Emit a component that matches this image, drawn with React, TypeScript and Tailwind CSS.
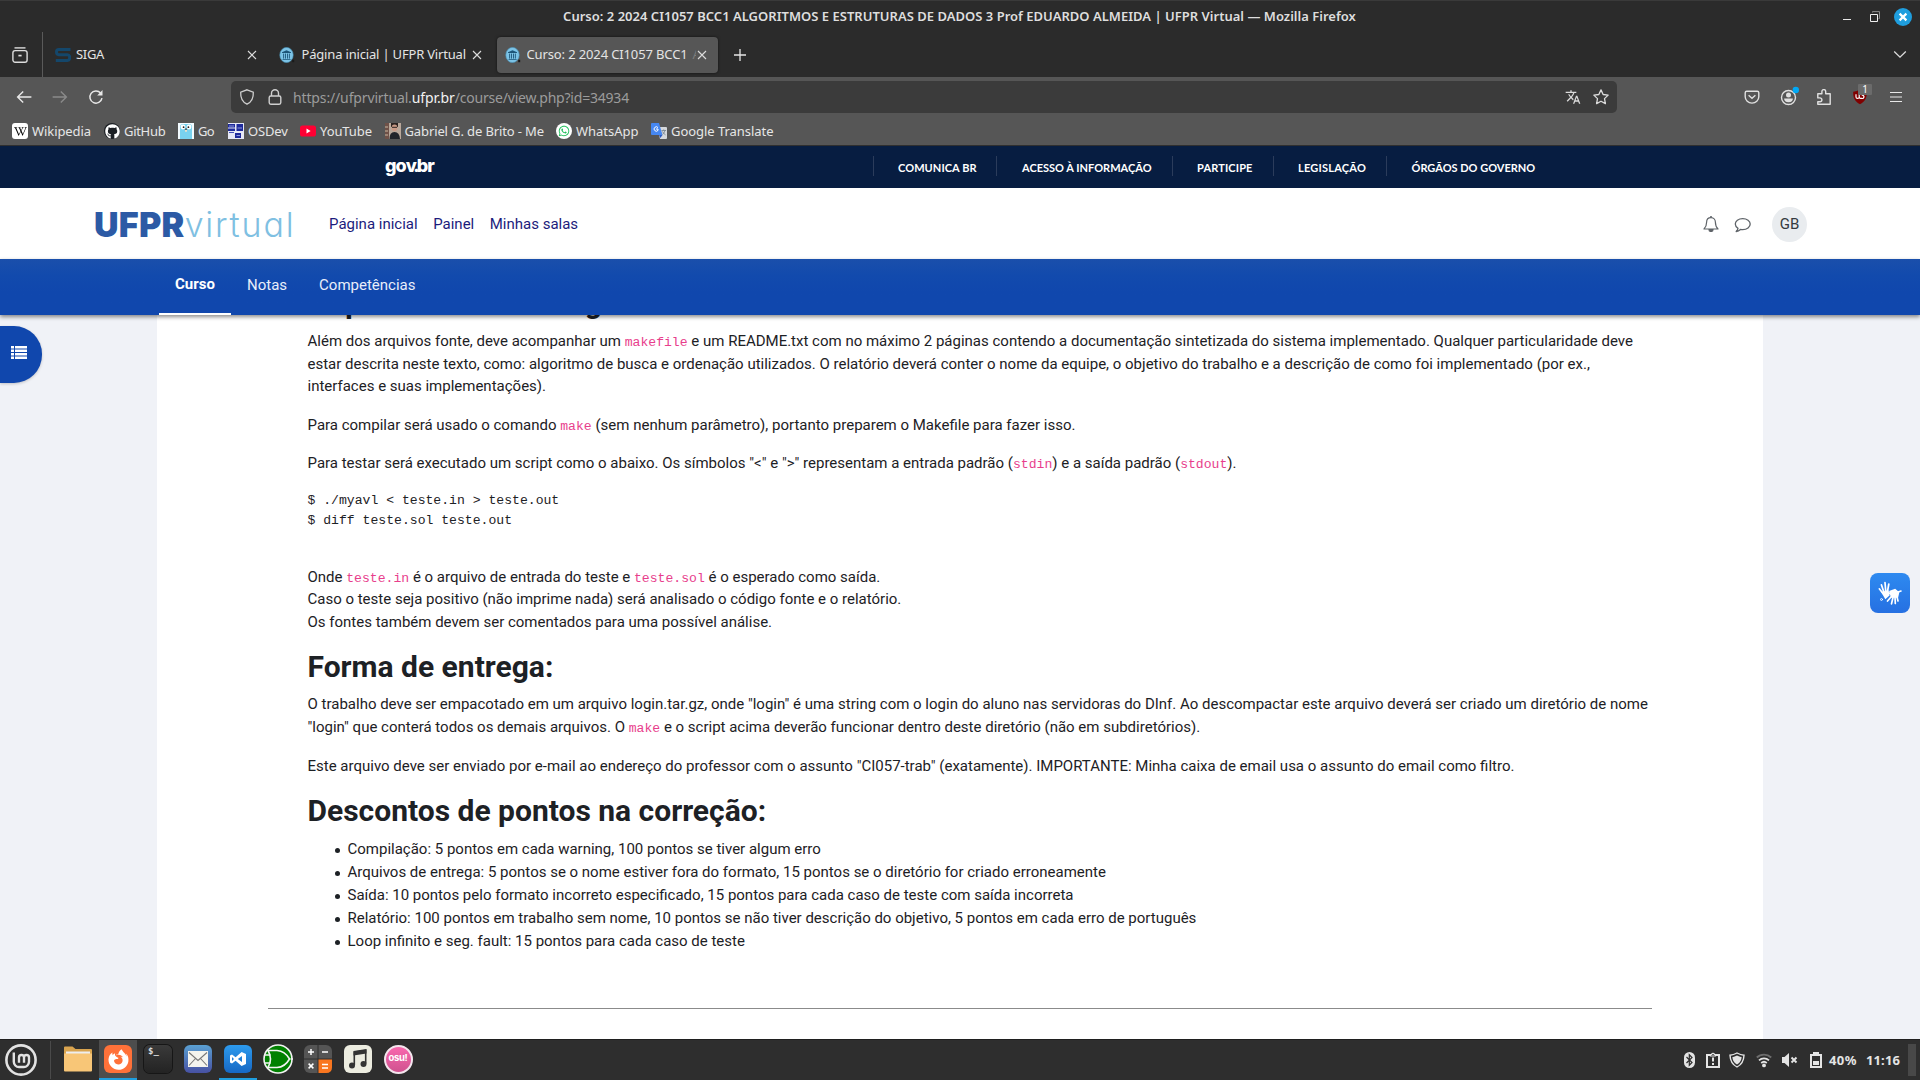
import type { ReactNode } from "react";
import { FaFirefoxBrowser, FaGithub, FaWhatsapp, FaWikipediaW } from "react-icons/fa6";
import { MdTranslate } from "react-icons/md";

/* ---------- small helpers ---------- */

function Code({ children }: { children: ReactNode }) {
  return (
    <code className="font-['Liberation_Mono',monospace] text-[13.125px] leading-none text-[#e83e8c]">{children}</code>
  );
}

function CloseX() {
  return (
    <svg className="h-3 w-3 shrink-0" viewBox="0 0 12 12" fill="none" stroke="#dcdcdc" strokeWidth="1.1">
      <path d="M2 2l8 8M10 2l-8 8" />
    </svg>
  );
}

function UfprFavicon() {
  return (
    <svg className="h-4 w-4 shrink-0" viewBox="0 0 16 16">
      <ellipse cx="7.500" cy="8" rx="6.700" ry="7.600" fill="#7cc3e6" stroke="#4d9cc4" strokeWidth=".6" />
      <path d="M3 5.200L7.500 3.200 12 5.200v.8H3zM3.600 12.300h8v.8h-8z" fill="#1c5578" />
      <path d="M4.600 6.600v5M6.500 6.600v5M8.500 6.600v5M10.400 6.600v5" stroke="#1c5578" strokeWidth=".9" />
      <path d="M13.200 12.800h2v2.400h-2z" fill="#1a1a1a" />
    </svg>
  );
}

/* ---------- browser chrome ---------- */

function TitleBar() {
  return (
    <div className="flex h-8 items-center border-t border-[#3a3a3a]">
      <div className="w-[1840px] shrink-0 pb-[2px] pl-[79px] text-center text-[13px] leading-4 font-semibold tracking-[0.015px] text-[#dedede]">
        Curso: 2 2024 CI1057 BCC1 ALGORITMOS E ESTRUTURAS DE DADOS 3 Prof EDUARDO ALMEIDA | UFPR Virtual — Mozilla
        Firefox
      </div>
      <svg className="ml-[2px] h-4 w-4" viewBox="0 0 16 16">
        <path d="M1 10.500h8" stroke="#e8e8e8" />
      </svg>
      <svg className="ml-[11px] h-4 w-4" viewBox="0 0 16 16" fill="none">
        <path d="M3.500 3.500v-.9h7v7h-1" stroke="#8c8c8c" />
        <path d="M1.500 5.500h7v7h-7z" stroke="#f0f0f0" />
      </svg>
      <div className="ml-[9px] flex h-[18px] w-[18px] items-center justify-center rounded-full bg-[#1f9ede]">
        <svg className="h-[10px] w-[10px]" viewBox="0 0 10 10" stroke="#fff" strokeWidth="2.200">
          <path d="M1.600 1.600l6.800 6.800M8.400 1.600L1.600 8.400" />
        </svg>
      </div>
    </div>
  );
}

function TabStrip() {
  return (
    <div className="flex h-[45px] items-center text-[13px] text-[#e4e4e4]">
      <svg className="ml-[12px] h-4 w-4" viewBox="0 0 16 16" fill="none" stroke="#dcdcdc" strokeWidth="1.400">
        <path d="M2.500.9h11" />
        <rect x=".9" y="3.600" width="14.200" height="11.600" rx="2.200" />
        <path d="M6.400 8.600h3.200" strokeWidth="1.700" />
      </svg>
      <div className="ml-[14px] h-full w-px bg-[#5a5a5a]" />
      <div className="flex w-[224px] items-center pl-[12px]">
        <svg className="h-4 w-4" viewBox="0 0 16 16" fill="none" stroke="#14476b" strokeWidth="3">
          <path d="M15.500 2.400H3.800Q1.500 2.400 1.500 5T3.800 7.700h8.600q2.300 0 2.300 2.800t-2.300 2.900H.8" />
        </svg>
        <span className="ml-[5px] flex-1 tracking-[-0.300px]">SIGA</span>
        <span className="mr-[9px]">
          <CloseX />
        </span>
      </div>
      <div className="flex w-[230px] items-center pl-[12px]">
        <UfprFavicon />
        <span className="ml-[6.500px] flex-1 tracking-[-0.180px] whitespace-nowrap">Página inicial | UFPR Virtual</span>
        <span className="mr-[14px]">
          <CloseX />
        </span>
      </div>
      <div className="flex h-9 w-[221px] items-center rounded-[4px] bg-[#565656] pl-[8px] shadow-[0_0_3px_rgba(0,0,0,0.6)]">
        <UfprFavicon />
        <span className="ml-[5.500px] flex w-[169.500px] gap-[5px] overflow-hidden tracking-[-0.130px] whitespace-nowrap">
          Curso: 2 2024 CI1057 BCC1 <span className="text-[#7c7c7c]">A</span>
        </span>
        <CloseX />
      </div>
      <svg className="ml-[15px] h-[14px] w-[14px]" viewBox="0 0 14 14" stroke="#e6e6e6" strokeWidth="1.300">
        <path d="M7 1v12M1 7h12" />
      </svg>
      <svg className="mr-[13px] ml-auto h-[14px] w-[14px]" viewBox="0 0 14 14" fill="none" stroke="#dcdcdc" strokeWidth="1.300">
        <path d="M1.200 3.500l5.800 5.600 5.800-5.600" />
      </svg>
    </div>
  );
}

function NavBar() {
  return (
    <div className="flex h-10 items-center text-[#e8e8e8]">
      <svg className="ml-4 h-4 w-4" viewBox="0 0 16 16" fill="none" stroke="#e8e8e8" strokeWidth="1.400">
        <path d="M7.200 2.400L1.600 8l5.600 5.600M1.800 8h13.600" />
      </svg>
      <svg className="ml-5 h-4 w-4" viewBox="0 0 16 16" fill="none" stroke="#8a8a8a" strokeWidth="1.400">
        <path d="M8.800 2.400L14.400 8l-5.600 5.600M14.200 8H.6" />
      </svg>
      <svg className="ml-5 h-4 w-4" viewBox="0 0 16 16" fill="none" stroke="#e8e8e8" strokeWidth="1.500">
        <path d="M14 9.200A6.100 6.100 0 1 1 12.600 4" />
        <path d="M14.500 1v5.400H9.200z" fill="#e8e8e8" stroke="none" />
      </svg>
      <div className="ml-[127px] flex h-8 w-[1386px] items-center rounded-[5px] bg-[#3b3b3b]">
        <svg className="ml-2 h-4 w-4" viewBox="0 0 16 16" fill="none" stroke="#cfcfcf" strokeWidth="1.300">
          <path d="M8 .8l6.300 2.300c.3 5.600-1.200 9.700-6.300 12.100C2.900 12.800 1.400 8.700 1.700 3.100z" />
        </svg>
        <svg className="ml-3 h-4 w-4" viewBox="0 0 16 16" fill="none" stroke="#cfcfcf" strokeWidth="1.400">
          <rect x="2.200" y="7" width="11.600" height="8.200" rx="1.600" />
          <path d="M4.500 7V4.200a3.500 3.500 0 0 1 7 0V7" />
        </svg>
        <span className="ml-[10px] flex text-[14px] text-[#9c9c9c]">
          <span className="tracking-[-0.140px]">https://ufprvirtual.</span>
          <span className="tracking-[-0.100px] text-[#f2f2f2]">ufpr.br</span>
          <span className="tracking-[-0.210px]">/course/view.php?id=34934</span>
        </span>
        <MdTranslate className="ml-auto h-4 w-4 text-[#dcdcdc]" />
        <svg className="mr-2 ml-3 h-4 w-4" viewBox="0 0 16 16" fill="none" stroke="#dcdcdc" strokeWidth="1.300" strokeLinejoin="round">
          <path d="M8 .9l2.150 4.600 5 .650-3.650 3.500.9 5L8 12.200l-4.400 2.450.9-5L.850 6.150l5-.650z" />
        </svg>
      </div>
      <svg className="ml-[127px] h-4 w-4" viewBox="0 0 16 16" fill="none" stroke="#e0e0e0" strokeWidth="1.400">
        <path d="M2.700 2.300h10.600q1.500 0 1.500 1.500v4a6.800 6.300 0 0 1-13.600 0v-4q0-1.500 1.500-1.500z" />
        <path d="M4.600 6.200L8 9.300l3.400-3.100" />
      </svg>
      <svg className="ml-5 h-[22px] w-5" viewBox="0 0 20 22" fill="none">
        <circle cx="8.500" cy="11.500" r="7" stroke="#e0e0e0" strokeWidth="1.400" />
        <circle cx="8.500" cy="9" r="2.500" fill="#e0e0e0" />
        <path d="M4.100 12.600h8.800q0 3.700-4.400 3.700t-4.400-3.700z" fill="#e0e0e0" />
        <circle cx="15.800" cy="4" r="3.200" fill="#00a8f5" />
      </svg>
      <svg className="ml-4 h-4 w-4" viewBox="0 0 16 16" fill="none" stroke="#e0e0e0" strokeWidth="1.400" strokeLinejoin="round">
        <path d="M1.800 8.900V4.800h4.100V2.500a1.900 1.900 0 0 1 3.800 0v2.300h4.500v10.400H1.800v-2.500H4a1.900 1.900 0 0 0 0-3.800z" />
      </svg>
      <div className="relative ml-5 h-4 w-4">
        <svg className="h-4 w-4" viewBox="0 0 16 16">
          <path d="M8 .5q3.500 2 6.800 2.200c.3 6-1.800 9.900-6.800 12.600C3 12.600.900 8.700 1.200 2.700 4.500 2.500 8 .5 8 .5z" fill="#800000" />
          <path d="M4 5.200v2.700q0 1.500 1.600 1.500t1.600-1.500V5.200v2.700q0 1.500 2.500 1.500a1.700 1.700 0 1 0 0-3.200" stroke="#fff" fill="none" strokeWidth="1.200" />
        </svg>
        <span className="absolute -top-[5px] left-[6px] h-[11px] w-[14px] rounded-[1px] bg-[#6b6b6b] text-center text-[10px] leading-[11px] text-white">
          1
        </span>
      </div>
      <svg className="ml-5 h-4 w-4" viewBox="0 0 16 16" stroke="#e8e8e8" strokeWidth="1.200">
        <path d="M2 3.500h12M2 8h12M2 12.500h12" />
      </svg>
    </div>
  );
}

function Bookmark({ icon, label, className }: { icon: ReactNode; label: string; className: string }) {
  return (
    <div className={className}>
      <span className="flex h-4 w-4 shrink-0 items-center justify-center">{icon}</span>
      <span className="ml-1 pt-[2px] whitespace-nowrap">{label}</span>
    </div>
  );
}

function BookmarksBar() {
  return (
    <div className="flex h-[29px] items-center border-b border-[#2f2f2f] pl-3 text-[13px] text-[#e6e6e6]">
      <Bookmark
        className="flex w-[92px] items-center tracking-[-0.080px]"
        label="Wikipedia"
        icon={
          <span className="flex h-4 w-4 items-center justify-center rounded-[3px] bg-white">
            <FaWikipediaW className="h-[13px] w-[13px] text-black" />
          </span>
        }
      />
      <Bookmark
        className="flex w-[74px] items-center tracking-[-0.300px]"
        label="GitHub"
        icon={
          <span className="flex h-4 w-4 items-center justify-center rounded-full bg-[#1b1f24]">
            <FaGithub className="h-[15px] w-[15px] text-white" />
          </span>
        }
      />
      <Bookmark
        className="flex w-[50px] items-center tracking-[-0.600px]"
        label="Go"
        icon={
          <svg className="h-4 w-4" viewBox="0 0 16 16">
            <path d="M0 0h16v16H0z" fill="#f3fbff" />
            <path d="M2 16V4q0-3 3-3h6q3 0 3 3v12z" fill="#79d2ef" />
            <circle cx="5" cy="4" r="2.400" fill="#fff" />
            <circle cx="11" cy="4" r="2.400" fill="#fff" />
            <circle cx="5.600" cy="4.200" r=".9" fill="#222" />
            <circle cx="10.400" cy="4.200" r=".9" fill="#222" />
            <path d="M7 6.200h2v2.600H7z" fill="#e9e0cc" />
            <path d="M6.900 5.600h2.200v1.100H6.900z" fill="#333" />
          </svg>
        }
      />
      <Bookmark
        className="flex w-[72px] items-center tracking-[-0.150px]"
        label="OSDev"
        icon={
          <svg className="h-4 w-4" viewBox="0 0 16 16">
            <path d="M0 0h16v16H0z" fill="#e6e8f6" />
            <path d="M0 1h7v3.500H0zM8.500 1H15v7H8.500zM0 5.500h7V8H0zM7 10h6v5H7z" fill="#1e2a9b" />
            <path d="M1 3h5M9.500 5h4.500M8.500 12.500H12" stroke="#aab4ee" strokeWidth=".8" />
            <path d="M1 9.500h5" stroke="#4450b8" />
          </svg>
        }
      />
      <Bookmark
        className="flex w-[84.500px] items-center tracking-[-0.080px]"
        label="YouTube"
        icon={
          <svg className="h-4 w-4" viewBox="0 0 16 16">
            <rect y="2.500" width="16" height="11" rx="2.600" fill="#ff0033" />
            <path d="M6.500 5.600L10.600 8l-4.100 2.400z" fill="#fff" />
          </svg>
        }
      />
      <Bookmark
        className="flex w-[171.500px] items-center tracking-[-0.120px]"
        label="Gabriel G. de Brito - Me"
        icon={
          <svg className="h-4 w-4" viewBox="0 0 16 16">
            <path d="M0 0h16v16H0z" fill="#b9a89b" />
            <path d="M0 0h4v16H0z" fill="#6f5148" />
            <path d="M0 4h3M0 8h3M0 12h3" stroke="#c9b8a0" />
            <path d="M6 0h7v4H6z" fill="#2a2220" />
            <ellipse cx="9.500" cy="4.800" rx="2.900" ry="3.400" fill="#c99a86" />
            <path d="M7 4.300h5" stroke="#2d2522" />
            <path d="M4.500 16q0-7 5-7t5.500 7z" fill="#22252b" />
          </svg>
        }
      />
      <Bookmark
        className="flex w-[95px] items-center tracking-[-0.020px]"
        label="WhatsApp"
        icon={
          <span className="flex h-4 w-4 items-center justify-center rounded-full bg-white">
            <FaWhatsapp className="h-[12px] w-[12px] text-[#1fbf5a]" />
          </span>
        }
      />
      <Bookmark
        className="flex w-[125px] items-center tracking-[-0.040px]"
        label="Google Translate"
        icon={
          <svg className="h-4 w-4" viewBox="0 0 16 16">
            <path d="M6 4h9q1 0 1 1v10q0 1-1 1H9z" fill="#d5d8dc" />
            <path d="M1 0h7l3.500 12H1q-1 0-1-1V1q0-1 1-1z" fill="#4687f1" />
            <path d="M8 12h3.500L9.300 15z" fill="#2b59c3" />
            <path d="M7 4.600A2.200 2.200 0 1 0 7 7.400V6H5" stroke="#fff" fill="none" strokeWidth="1" />
            <path d="M10.500 7.500h4.500M12.700 6.500v1M14 7.500q-.6 2.500-2.600 4M11.500 8.500q.8 2 3 3.300" stroke="#7b8894" fill="none" strokeWidth=".9" />
          </svg>
        }
      />
    </div>
  );
}

/* ---------- page ---------- */

function GovBar() {
  return (
    <div className="flex h-[42px] items-center bg-[#071d41] font-['Lato',sans-serif] text-[11px] font-bold text-white">
      <div className="ml-[385px] w-[488px] pb-[3px] font-['Inter',sans-serif] text-[18px] leading-none font-extrabold tracking-[-0.900px]">
        go<span className="tracking-[-3px]">v.</span>br
      </div>
      <div className="flex w-[123px] items-center">
        <i className="mb-[2px] h-5 w-px bg-[#2b3c5b]" />
        <span className="pt-[2px] pl-6 tracking-[0.070px]">COMUNICA BR</span>
      </div>
      <div className="flex w-[176px] items-center">
        <i className="mb-[2px] h-5 w-px bg-[#2b3c5b]" />
        <span className="pt-[2px] pl-[25px] tracking-[0.010px]">ACESSO À INFORMAÇÃO</span>
      </div>
      <div className="flex w-[101px] items-center">
        <i className="mb-[2px] h-5 w-px bg-[#2b3c5b]" />
        <span className="pt-[2px] pl-6 tracking-[0.140px]">PARTICIPE</span>
      </div>
      <div className="flex w-[113px] items-center">
        <i className="mb-[2px] h-5 w-px bg-[#2b3c5b]" />
        <span className="pt-[2px] pl-6 tracking-[0.220px]">LEGISLAÇÃO</span>
      </div>
      <div className="flex items-center">
        <i className="mb-[2px] h-5 w-px bg-[#2b3c5b]" />
        <span className="pt-[2px] pl-[24.500px]">ÓRGÃOS DO GOVERNO</span>
      </div>
    </div>
  );
}

function SiteHeader() {
  return (
    <div className="flex h-[71px] items-center bg-white text-[15px] text-[#1c1c7c]">
      <div className="ml-[94px] flex w-[235px] items-baseline pt-[3px] font-['Inter',sans-serif] text-[34px] leading-none">
        <span className="font-black tracking-[0.300px] text-[#2c5aa5]">UFPR</span>
        <span className="font-light tracking-[1.800px] text-[#7fc0e2] [font-feature-settings:'cv11']">virtual</span>
      </div>
      <nav className="flex gap-[15.500px] pt-[2px]">
        <span>Página inicial</span>
        <span>Painel</span>
        <span>Minhas salas</span>
      </nav>
      <svg className="mt-px ml-auto h-4 w-4" viewBox="0 0 16 16" fill="none" stroke="#5f6469" strokeWidth="1.200">
        <path d="M8 1.600c-3 0-4.400 2.200-4.400 4.700 0 3.900-1 5.200-2.600 6.700h14c-1.600-1.500-2.600-2.800-2.600-6.700 0-2.500-1.400-4.700-4.400-4.700z" strokeLinejoin="round" />
        <path d="M8 0v1.600" strokeWidth="1.600" />
        <path d="M6 13.500a2 2 0 0 0 4 0z" fill="#5f6469" />
      </svg>
      <svg className="mt-[2px] ml-[15px] h-[17px] w-[17px]" viewBox="0 0 17 17" fill="none" stroke="#5f6469" strokeWidth="1.300" strokeLinejoin="round">
        <path d="M8.700 2.700c-4.300 0-7.400 2.400-7.400 5.400 0 1.800 1.100 3.300 2.700 4.300-.3 1.300-.9 2.200-1.800 3.100 1.800-.2 3.200-1 4.300-2 .7.100 1.400.2 2.200.2 4.300 0 7.500-2.500 7.500-5.600s-3.200-5.400-7.500-5.400z" />
      </svg>
      <div className="mt-[2px] mr-[113px] ml-[21px] flex h-[35px] w-[35px] items-center justify-center rounded-full bg-[#e9ecef] text-[#343a40]">
        GB
      </div>
    </div>
  );
}

function CourseNav() {
  return (
    <div className="relative z-10 flex h-14 bg-linear-to-b from-[#1a4fab] via-[#124aad] via-30% to-[#1047ad] to-60% pl-[159px] text-[15px] text-[#e8eefa] shadow-[0_2px_4px_rgba(0,0,0,0.45)]">
      <div className="flex w-[72px] justify-center border-b-2 border-white pt-[14px] font-bold text-white">Curso</div>
      <div className="px-4 pt-[15px]">Notas</div>
      <div className="px-4 pt-[15px]">Competências</div>
    </div>
  );
}

const deductions = [
  "Compilação: 5 pontos em cada warning, 100 pontos se tiver algum erro",
  "Arquivos de entrega: 5 pontos se o nome estiver fora do formato, 15 pontos se o diretório for criado erroneamente",
  "Saída: 10 pontos pelo formato incorreto especificado, 15 pontos para cada caso de teste com saída incorreta",
  "Relatório: 100 pontos em trabalho sem nome, 10 pontos se não tiver descrição do objetivo, 5 pontos em cada erro de português",
  "Loop infinito e seg. fault: 15 pontos para cada caso de teste",
];

function Article() {
  return (
    <article className="-mt-[30px] ml-[150.500px] text-[15px] leading-[22.5px] whitespace-nowrap text-[#1d2125]">
      <h3 className="mb-[9px] text-[30px] leading-9 font-bold">O que deve ser entregue</h3>
      <p className="mb-4">
        Além dos arquivos fonte, deve acompanhar um <Code>makefile</Code> e um README.txt com no máximo 2 páginas
        contendo a documentação sintetizada do sistema implementado. Qualquer particularidade deve
        <br />
        estar descrita neste texto, como: algoritmo de busca e ordenação utilizados. O relatório deverá conter o nome
        da equipe, o objetivo do trabalho e a descrição de como foi implementado (por ex.,
        <br />
        interfaces e suas implementações).
      </p>
      <p className="mb-4">
        Para compilar será usado o comando <Code>make</Code> (sem nenhum parâmetro), portanto preparem o Makefile para
        fazer isso.
      </p>
      <p className="mb-[16.5px]">
        Para testar será executado um script como o abaixo. Os símbolos "&lt;" e "&gt;" representam a entrada padrão (
        <Code>stdin</Code>) e a saída padrão (<Code>stdout</Code>).
      </p>
      <pre className="mb-[34.500px] font-['Liberation_Mono',monospace] text-[13.125px] leading-5">
        {"$ ./myavl < teste.in > teste.out\n$ diff teste.sol teste.out"}
      </pre>
      <p className="mb-4">
        Onde <Code>teste.in</Code> é o arquivo de entrada do teste e <Code>teste.sol</Code> é o esperado como saída.
        <br />
        Caso o teste seja positivo (não imprime nada) será analisado o código fonte e o relatório.
        <br />
        Os fontes também devem ser comentados para uma possível análise.
      </p>
      <h3 className="mb-2 text-[30px] leading-9 font-bold">Forma de entrega:</h3>
      <p className="mb-[17px]">
        O trabalho deve ser empacotado em um arquivo login.tar.gz, onde "login" é uma string com o login do aluno nas
        servidoras do DInf. Ao descompactar este arquivo deverá ser criado um diretório de nome
        <br />
        "login" que conterá todos os demais arquivos. O <Code>make</Code> e o script acima deverão funcionar dentro
        deste diretório (não em subdiretórios).
      </p>
      <p className="mb-[15px]">
        Este arquivo deve ser enviado por e-mail ao endereço do professor com o assunto "CI057-trab" (exatamente).
        IMPORTANTE: Minha caixa de email usa o assunto do email como filtro.
      </p>
      <h3 className="mb-[9px] text-[30px] leading-9 font-bold">Descontos de pontos na correção:</h3>
      <ul className="pl-[27px] leading-[23px]">
        {deductions.map((item) => (
          <li key={item} className="flex items-center">
            <span className="mt-[2px] mr-2 h-[5px] w-[5px] rounded-full bg-[#1d2125]" />
            {item}
          </li>
        ))}
      </ul>
    </article>
  );
}

function Content() {
  return (
    <div className="flex min-h-0 flex-1 overflow-hidden bg-[#f0f2f7]">
      <div className="w-[157px] shrink-0 pt-[11px]">
        <div className="flex h-[57px] w-[42px] items-center rounded-r-[28px] bg-[#1047ad] pb-[4px] pl-[11px] shadow-[0_1px_3px_rgba(0,0,0,0.2)]">
          <svg className="h-[13px] w-4" viewBox="0 0 16 13" fill="#fff">
            <path d="M0 0h3v2.500H0zM4 0h12v2.500H4zM0 3.500h3V6H0zM4 3.500h12V6H4zM0 7h3v2.500H0zM4 7h12v2.500H4zM0 10.500h3V13H0zM4 10.500h12V13H4z" />
          </svg>
        </div>
      </div>
      <main className="w-[1606px] shrink-0 bg-white">
        <Article />
        <hr className="mt-[55px] ml-[111px] w-[1384px] border-[#8b8b8b]" />
      </main>
      <div className="flex-1 pt-[258px] pl-[107px]">
        <div className="flex h-10 w-10 items-center justify-center rounded-lg bg-linear-to-b from-[#2e8af0] to-[#2670e2]">
          <svg className="h-6 w-6" viewBox="0 0 24 24" fill="none" stroke="#fff" strokeLinecap="round">
            <path d="M5 12.500L1.300 7.800M6 11.500L3.400 3.800M7.800 11L7 1.500M9.300 11.500l1.500-8.500" strokeWidth="1.700" />
            <path d="M4.300 11.500l5.600-1.300 1 3.800-3.400 3z" fill="#fff" strokeWidth="1.500" />
            <path d="M13 16l-3.500 4M15 16.500l-1.500 6.300M17 16l.3 6.500M18.800 15l1.200 5" strokeWidth="1.700" />
            <path d="M12 10.500l5-2 3.500 3-1 4.500h-6z" fill="#fff" strokeWidth="1.500" />
            <path d="M8 13.300l5-1.500M20 11l3-1" strokeWidth="1.600" />
            <circle cx="3.500" cy="18.500" r="1" strokeWidth=".8" />
          </svg>
        </div>
      </div>
    </div>
  );
}

/* ---------- desktop panel ---------- */

function Slot({ children, state }: { children: ReactNode; state?: "active" | "open" }) {
  return (
    <div className="flex h-full w-10 justify-center">
      <div
        className={
          state === "active"
            ? "flex h-full w-[38px] items-center justify-center border-b-2 border-[#1f9ede] bg-[#4d4d4d]"
            : state === "open"
              ? "flex h-full w-[38px] items-center justify-center border-b-2 border-[#1f9ede]"
              : "flex h-full w-[38px] items-center justify-center border-b-2 border-transparent"
        }
      >
        {children}
      </div>
    </div>
  );
}

function Taskbar() {
  return (
    <div className="flex h-[41px] items-center border-t border-[#1f1f1f] bg-[#2e2e2e]">
      <svg className="ml-[5px] h-8 w-8" viewBox="0 0 32 32" fill="none" stroke="#e2e2e2">
        <circle cx="16" cy="16" r="14.600" strokeWidth="2.600" />
        <path d="M8.800 8.500v9.300a5.200 5.200 0 0 0 5.200 5.200h4.800a5.200 5.200 0 0 0 5.200-5.200v-4.300a2.500 2.500 0 0 0-5 0v5.200m0-5.200a2.500 2.500 0 0 0-5 0v5.200" strokeWidth="2.400" />
      </svg>
      <div className="mr-[7px] ml-[13px] h-[38px] w-px bg-[#4a4a4a]" />
      <Slot>
        <svg className="h-7 w-7" viewBox="0 0 28 28">
          <path d="M0 2.500Q0 1.500 1 1.500h7.500l3 2.500H27q1 0 1 1v6H0z" fill="#d9a44f" />
          <path d="M2 6.500h24v3H2z" fill="#eeeeee" />
          <path d="M0 8.500h28v17q0 1-1 1H1q-1 0-1-1z" fill="#f8c677" />
        </svg>
      </Slot>
      <Slot state="active">
        <span className="flex h-7 w-7 items-center justify-center rounded-[6px] bg-[#ff7139]">
          <FaFirefoxBrowser className="h-[21px] w-[21px] text-white" />
        </span>
      </Slot>
      <Slot>
        <span className="h-7 w-7 rounded-[6px] bg-linear-to-b from-[#3a3a3a] to-[#232323] pl-1 font-['DejaVu_Sans_Mono',monospace] text-[9px] leading-[13px] font-bold text-[#dddddd] shadow-[0_0_0_1px_#161616]">
          $_
        </span>
      </Slot>
      <Slot>
        <svg className="h-7 w-7" viewBox="0 0 28 28">
          <defs>
            <linearGradient id="mail" x2="0" y2="1">
              <stop stopColor="#5aa0d2" />
              <stop offset="1" stopColor="#4751a3" />
            </linearGradient>
          </defs>
          <rect width="28" height="28" rx="6" fill="url(#mail)" />
          <path d="M4 6h20v16H4z" fill="#f4f4ee" />
          <path d="M5 7.500l9 8 9-8M5 20.500l6.500-7M23 20.500l-6.500-7" fill="none" stroke="#777" strokeWidth="1.100" />
        </svg>
      </Slot>
      <Slot state="open">
        <svg className="h-7 w-7" viewBox="0 0 28 28">
          <defs>
            <linearGradient id="vsc" x2="0" y2="1">
              <stop stopColor="#2d9bee" />
              <stop offset="1" stopColor="#1668c4" />
            </linearGradient>
          </defs>
          <rect width="28" height="28" rx="6" fill="url(#vsc)" />
          <path d="M17.600 7l4.400 2v10l-4.400 2-6-5.200L8 18.600l-2-1V10.400l2-1 3.600 2.800zM18 11l-4.200 3 4.200 3zM8 12v4l2-2z" fill="#fff" fillRule="evenodd" />
        </svg>
      </Slot>
      <Slot>
        <svg className="h-[30px] w-[30px]" viewBox="0 0 30 30" fill="none" stroke="#f2f2f2" strokeWidth="1.600">
          <circle cx="15" cy="15" r="14" fill="#008000" />
          <path d="M1.500 11h6M1.500 19h6M27.500 15H30" />
          <path d="M5 6.500h9q8 .5 12.500 8.500-4.500 8-12.500 8.500H5q5-8.500 0-17z" />
        </svg>
      </Slot>
      <Slot>
        <svg className="h-7 w-7" viewBox="0 0 28 28">
          <rect width="28" height="28" rx="6" fill="#555555" />
          <path d="M14 14h14v8q0 6-6 6h-8z" fill="#f9761f" />
          <path d="M14 0v28M0 14h28" stroke="#2b2b2b" strokeWidth=".9" />
          <path d="M4 7h6M7 4v6M18 7h6M4.600 18.600l4.800 4.800M9.400 18.600l-4.800 4.800M18 19.500h6M18 23h6" stroke="#fff" strokeWidth="1.500" />
        </svg>
      </Slot>
      <Slot>
        <svg className="h-7 w-7" viewBox="0 0 28 28">
          <rect width="28" height="28" rx="6" fill="#ecece0" />
          <path d="M10.300 20V6.700L21.700 5v13.500" fill="none" stroke="#333" strokeWidth="1.600" />
          <path d="M9.500 6.500l13-2v4l-13 2z" fill="#333" />
          <circle cx="8" cy="20.500" r="3" fill="#333" />
          <circle cx="19.500" cy="19" r="3" fill="#333" />
        </svg>
      </Slot>
      <Slot>
        <span className="flex h-[29px] w-[29px] items-center justify-center rounded-full border-2 border-[#f4e6ee] bg-linear-to-b from-[#f968ae] to-[#d0528f] pb-px font-['Inter',sans-serif] text-[9.500px] font-bold tracking-[-0.300px] text-white">
          osu!
        </span>
      </Slot>
      <div className="ml-auto flex items-center">
        <svg className="h-4 w-4" viewBox="0 0 16 16" fill="none">
          <rect x="3" y="0" width="11" height="16" rx="5.500" fill="#e4e4e4" />
          <path d="M5.500 5l5.500 5.500-2.700 2.700V2.800L11 5.500 5.500 11" stroke="#2e2e2e" strokeWidth="1.200" />
        </svg>
        <svg className="ml-2 h-4 w-4" viewBox="0 0 16 16" fill="none">
          <path d="M2 3h12v12H2z" stroke="#e4e4e4" strokeWidth="2" />
          <path d="M5.500 4V2.500h1a1.600 1.600 0 0 1 3 0h1V4z" stroke="#e4e4e4" strokeWidth="1.200" fill="#2e2e2e" />
          <path d="M8 5.500v4M8 11v2" stroke="#e4e4e4" strokeWidth="2" />
        </svg>
        <svg className="ml-2 h-4 w-4" viewBox="0 0 16 16" fill="none">
          <path d="M8 1Q11.500 3 15 3.200 14.700 11.500 8 15 1.300 11.500 1 3.200 4.500 3 8 1z" stroke="#e4e4e4" strokeWidth="1.400" />
          <path d="M8 3.600q2.300 1.300 4.700 1.600-.7 5-4.700 7.400-4-2.400-4.700-7.400Q5.700 4.900 8 3.600z" fill="#e4e4e4" />
        </svg>
        <svg className="ml-[11px] h-4 w-4" viewBox="0 0 16 16" fill="none">
          <path d="M.8 5.500a10.500 10.500 0 0 1 14.400 0" stroke="#6d6d6d" strokeWidth="1.900" />
          <path d="M3 8.300a7.300 7.300 0 0 1 10 0M5.200 11a4.200 4.200 0 0 1 5.600 0" stroke="#e4e4e4" strokeWidth="1.700" />
          <circle cx="8" cy="13.400" r="1.900" fill="#e4e4e4" />
        </svg>
        <svg className="ml-[10px] h-4 w-4" viewBox="0 0 16 16">
          <path d="M0 5h2.500L7 1v14l-4.500-4H0z" fill="#e4e4e4" />
          <path d="M9.500 5.500l5 5M14.500 5.500l-5 5" stroke="#e4e4e4" strokeWidth="1.900" />
        </svg>
        <svg className="ml-[10px] h-4 w-4" viewBox="0 0 16 16">
          <path d="M5 0h6v2h3v14H2V2h3zM4 4v10h8V4z" fill="#e4e4e4" fillRule="evenodd" />
          <path d="M5 9h6v4H5z" fill="#e4e4e4" />
        </svg>
        <span className="ml-[5px] w-[37px] pt-px text-[13px] font-bold tracking-[0.400px] text-[#e4e4e4]">40%</span>
        <span className="w-[42px] pt-px text-[13px] font-bold tracking-[0.120px] text-[#e4e4e4]">11:16</span>
        <div className="mr-1 h-8 w-2 bg-[#484848]" />
      </div>
    </div>
  );
}

export default function App() {
  return (
    <div className="flex h-[1080px] w-[1920px] flex-col overflow-hidden font-['Noto_Sans',sans-serif]">
      <header className="bg-[#2b2b2b]">
        <TitleBar />
        <TabStrip />
        <div className="bg-[#565656]">
          <NavBar />
          <BookmarksBar />
        </div>
      </header>
      <div className="flex min-h-0 flex-1 flex-col font-['Roboto',sans-serif]">
        <GovBar />
        <SiteHeader />
        <CourseNav />
        <Content />
      </div>
      <Taskbar />
    </div>
  );
}
